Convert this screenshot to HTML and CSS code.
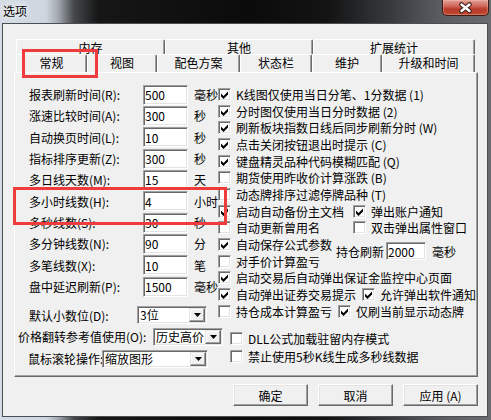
FILE: index.html
```html
<!DOCTYPE html>
<html lang="zh-CN">
<head>
<meta charset="utf-8">
<title>选项</title>
<link rel="stylesheet" href="styles.css">
</head>
<body>
<div class="window">
  <div class="titlebar">
    <span class="title">选项</span>
    <div class="close">
      <svg width="45" height="14" viewBox="0 0 45 14">
        <path d="M18.5 3.5 L26.5 10 M26.5 3.5 L18.5 10" stroke="#3b1b15" stroke-width="4.6" stroke-linecap="round" fill="none"/>
        <path d="M18.5 3.5 L26.5 10 M26.5 3.5 L18.5 10" stroke="#ffffff" stroke-width="2.4" stroke-linecap="round" fill="none"/>
      </svg>
    </div>
  </div>
  <div class="client">
    <div class="sheet">
      <div class="tabrow back">
        <div class="tab t-mem">内存</div>
        <div class="tab t-other">其他</div>
        <div class="tab t-ext">扩展统计</div>
      </div>
      <div class="tabrow front">
        <div class="tab t-gen">常规</div>
        <div class="tab t-view">视图</div>
        <div class="tab t-color">配色方案</div>
        <div class="tab t-status">状态栏</div>
        <div class="tab t-maint">维护</div>
        <div class="tab t-upg">升级和时间</div>
      </div>
      <div class="panel">
        <div class="cols">
          <div class="leftcol">
            <div class="lgrid">
              <span class="lbl">报表刷新时间(R):</span><input class="field" value="500"><span class="unit">毫秒</span>
              <span class="lbl">涨速比较时间(A):</span><input class="field" value="300"><span class="unit">秒</span>
              <span class="lbl">自动换页时间(L):</span><input class="field" value="10"><span class="unit">秒</span>
              <span class="lbl">指标排序更新(Z):</span><input class="field" value="300"><span class="unit">秒</span>
              <span class="lbl">多日线天数(M):</span><input class="field" value="15"><span class="unit">天</span>
              <span class="lbl">多小时线数(H):</span><input class="field" value="4"><span class="unit">小时</span>
              <span class="lbl">多秒线数(S):</span><input class="field" value="30"><span class="unit">秒</span>
              <span class="lbl">多分钟线数(N):</span><input class="field" value="90"><span class="unit">分</span>
              <span class="lbl">多笔线数(X):</span><input class="field" value="10"><span class="unit">笔</span>
              <span class="lbl">盘中延迟刷新(P):</span><input class="field" value="1500"><span class="unit">毫秒</span>
            </div>
            <div class="decrow">
              <span class="lbl">默认小数位(D):</span>
              <div class="combo c-dec"><span class="ctext">3位</span><span class="cbtn"><svg width="7" height="4" viewBox="0 0 7 4"><path d="M0 0 H7 L3.5 4 Z" fill="#000"/></svg></span></div>
            </div>
          </div>
          <div class="rightcol">
            <div class="row"><span class="chk"><span class="cb"><svg width="11" height="11" viewBox="0 0 11 11"><path d="M2 4.5 L4.5 7 L9 2.5 L9 5.5 L4.5 10 L2 7.5 Z" fill="#000"/></svg></span>K线图仅使用当日分笔、1分数据 (1)</span></div>
            <div class="row"><span class="chk"><span class="cb"><svg width="11" height="11" viewBox="0 0 11 11"><path d="M2 4.5 L4.5 7 L9 2.5 L9 5.5 L4.5 10 L2 7.5 Z" fill="#000"/></svg></span>分时图仅使用当日分时数据 (2)</span></div>
            <div class="row"><span class="chk"><span class="cb"><svg width="11" height="11" viewBox="0 0 11 11"><path d="M2 4.5 L4.5 7 L9 2.5 L9 5.5 L4.5 10 L2 7.5 Z" fill="#000"/></svg></span>刷新板块指数日线后同步刷新分时 (W)</span></div>
            <div class="row"><span class="chk"><span class="cb"><svg width="11" height="11" viewBox="0 0 11 11"><path d="M2 4.5 L4.5 7 L9 2.5 L9 5.5 L4.5 10 L2 7.5 Z" fill="#000"/></svg></span>点击关闭按钮退出时提示 (C)</span></div>
            <div class="row"><span class="chk"><span class="cb"><svg width="11" height="11" viewBox="0 0 11 11"><path d="M2 4.5 L4.5 7 L9 2.5 L9 5.5 L4.5 10 L2 7.5 Z" fill="#000"/></svg></span>键盘精灵品种代码模糊匹配 (Q)</span></div>
            <div class="row"><span class="chk"><span class="cb"></span>期货使用昨收价计算涨跌 (B)</span></div>
            <div class="row"><span class="chk"><span class="cb"></span>动态牌排序过滤停牌品种 (T)</span></div>
            <div class="row"><span class="chk fix"><span class="cb"><svg width="11" height="11" viewBox="0 0 11 11"><path d="M2 4.5 L4.5 7 L9 2.5 L9 5.5 L4.5 10 L2 7.5 Z" fill="#000"/></svg></span>启动自动备份主文档</span><span class="chk"><span class="cb"><svg width="11" height="11" viewBox="0 0 11 11"><path d="M2 4.5 L4.5 7 L9 2.5 L9 5.5 L4.5 10 L2 7.5 Z" fill="#000"/></svg></span>弹出账户通知</span></div>
            <div class="row"><span class="chk fix"><span class="cb"></span>自动更新曾用名</span><span class="chk"><span class="cb"></span>双击弹出属性窗口</span></div>
            <div class="pair">
              <div class="pairchecks">
                <div class="row"><span class="chk"><span class="cb"><svg width="11" height="11" viewBox="0 0 11 11"><path d="M2 4.5 L4.5 7 L9 2.5 L9 5.5 L4.5 10 L2 7.5 Z" fill="#000"/></svg></span>自动保存公式参数</span></div>
                <div class="row"><span class="chk"><span class="cb"></span>对手价计算盈亏</span></div>
              </div>
              <div class="refresh">
                <span>持仓刷新</span><input class="field f-ref" value="2000"><span class="unit2">毫秒</span>
              </div>
            </div>
            <div class="row"><span class="chk"><span class="cb"><svg width="11" height="11" viewBox="0 0 11 11"><path d="M2 4.5 L4.5 7 L9 2.5 L9 5.5 L4.5 10 L2 7.5 Z" fill="#000"/></svg></span>启动交易后自动弹出保证金监控中心页面</span></div>
            <div class="row"><span class="chk"><span class="cb"><svg width="11" height="11" viewBox="0 0 11 11"><path d="M2 4.5 L4.5 7 L9 2.5 L9 5.5 L4.5 10 L2 7.5 Z" fill="#000"/></svg></span>自动弹出证券交易提示</span><span class="chk"><span class="cb"><svg width="11" height="11" viewBox="0 0 11 11"><path d="M2 4.5 L4.5 7 L9 2.5 L9 5.5 L4.5 10 L2 7.5 Z" fill="#000"/></svg></span>允许弹出软件通知</span></div>
            <div class="row"><span class="chk"><span class="cb"></span>持仓成本计算盈亏</span><span class="chk"><span class="cb"><svg width="11" height="11" viewBox="0 0 11 11"><path d="M2 4.5 L4.5 7 L9 2.5 L9 5.5 L4.5 10 L2 7.5 Z" fill="#000"/></svg></span>仅刷当前显示动态牌</span></div>
          </div>
        </div>
        <div class="bottom">
          <div class="brow b1">
            <div class="lpart">
              <span class="blbl">价格翻转参考值使用(O):</span>
              <div class="combo c-price"><span class="ctext">历史高价</span><span class="cbtn"><svg width="7" height="4" viewBox="0 0 7 4"><path d="M0 0 H7 L3.5 4 Z" fill="#000"/></svg></span></div>
            </div>
            <span class="chk"><span class="cb"></span>DLL公式加载驻留内存模式</span>
          </div>
          <div class="brow b2">
            <div class="lpart">
              <span class="blbl">鼠标滚轮操作:</span>
              <div class="combo c-wheel"><span class="ctext">缩放图形</span><span class="cbtn"><svg width="7" height="4" viewBox="0 0 7 4"><path d="M0 0 H7 L3.5 4 Z" fill="#000"/></svg></span></div>
            </div>
            <span class="chk"><span class="cb"></span>禁止使用5秒K线生成多秒线数据</span>
          </div>
        </div>
      </div>
    </div>
    <div class="buttons">
      <button class="btn">确定</button>
      <button class="btn">取消</button>
      <button class="btn">应用 (A)</button>
    </div>
  </div>
  <div class="mark m-tab"></div>
  <div class="mark m-row"></div>
</div>
</body>
</html>
```

FILE: styles.css
```css
* { box-sizing: border-box; }
html, body { margin: 0; padding: 0; }
body {
  width: 491px;
  height: 420px;
  overflow: hidden;
  font-family: "Noto Sans CJK SC", "Noto Sans", sans-serif;
  font-size: 12px;
  color: #000;
  background: #1a1a1a;
}
.window {
  position: relative;
  width: 491px;
  height: 420px;
  display: flex;
  flex-direction: column;
  background: linear-gradient(to right, #d4dce5 0px, #cdd5de 46px, #a3a9b0 58px, #45484b 74px, #161616 98px, #0b0b0b 250px, #141414 330px, #373a3d 390px, #595d61 440px, #686c70 491px);
}
.titlebar {
  height: 23px;
  display: flex;
  justify-content: space-between;
  align-items: flex-start;
}
.title {
  padding-left: 3px;
  line-height: 22px;
  text-shadow: 0 0 4px #fff, 0 0 8px #fff;
}
.close {
  width: 47px;
  height: 16px;
  margin-right: 2px;
  border: 1px solid #3e1a14;
  border-top: none;
  border-radius: 0 0 5px 5px;
  background: linear-gradient(to bottom, #e3a095 0px, #d0685c 6px, #b83b2c 9px, #c2482f 15px);
  box-shadow: inset 0 0 0 1px rgba(255,200,190,0.35);
  display: flex;
  align-items: center;
  justify-content: center;
}
.client {
  flex: 1;
  margin: 0 3px 3px 2px;
  border: 1px solid #4a4d51;
  background: #f0f0f0;
}
.sheet {
  margin: 15px 0 0 11px;
  width: 464px;
}
.tabrow {
  display: flex;
  padding-left: 2px;
}
.tab {
  border-top: 1px solid #fff;
  border-left: 1px solid #fff;
  border-right: 1px solid #696969;
  box-shadow: inset -1px 0 #a0a0a0;
  border-radius: 2px 2px 0 0;
  text-align: center;
  overflow: hidden;
  white-space: nowrap;
}
.back { height: 15px; }
.back .tab { height: 15px; line-height: 15px; }
.front { height: 18px; }
.front .tab { height: 18px; line-height: 16px; }
.t-mem { width: 149px; }
.t-other { width: 148px; }
.t-ext { width: 162px; }
.t-gen { width: 71px; }
.t-view { width: 70px; }
.t-color { width: 83px; }
.t-status { width: 72px; }
.t-maint { width: 70px; }
.t-upg { width: 93px; }

.panel {
  height: 305px;
  border: 1px solid;
  border-color: #fff #696969 #696969 #fff;
  box-shadow: inset -1px -1px #a0a0a0;
}
.cols { display: flex; }
.leftcol {
  width: 203px;
  padding: 11px 0 0 14px;
}
.lgrid {
  display: grid;
  grid-template-columns: 108px 45px auto;
  column-gap: 6px;
  grid-auto-rows: 21.33px;
  align-items: center;
}
.lbl { white-space: nowrap; }
.field {
  width: 45px;
  height: 20px;
  margin: 0;
  padding: 0 1px;
  font: inherit;
  font-size: 12px;
  color: #000;
  background: #fff;
  border: 1px solid;
  border-color: #a0a0a0 #fff #fff #a0a0a0;
  box-shadow: inset 1px 1px #696969, inset -1px -1px #e3e3e3;
  outline: none;
}
.unit { white-space: nowrap; }
.decrow {
  display: flex;
  align-items: center;
  margin-top: 9px;
  height: 18px;
}
.decrow .lbl { width: 108px; }
.combo {
  display: flex;
  height: 18px;
  background: #fff;
  border: 1px solid;
  border-color: #a0a0a0 #fff #fff #a0a0a0;
  box-shadow: inset 1px 1px #696969, inset -1px -1px #e3e3e3;
  padding: 1px;
}
.ctext {
  flex: 1;
  line-height: 14px;
  padding-left: 1px;
  white-space: nowrap;
  overflow: hidden;
}
.cbtn {
  width: 16px;
  height: 14px;
  background: #f0f0f0;
  border: 1px solid;
  border-color: #e3e3e3 #696969 #696969 #e3e3e3;
  box-shadow: inset -1px -1px #a0a0a0, inset 1px 1px #fff;
  display: flex;
  align-items: center;
  justify-content: center;
}
.c-dec { width: 70px; }
.c-price { width: 70px; }
.c-wheel { width: 106px; }

.rightcol {
  padding-top: 13px;
  flex: 1;
}
.row {
  height: 16.7px;
  display: flex;
  align-items: center;
  white-space: nowrap;
}
.chk {
  display: inline-flex;
  align-items: center;
  gap: 5px;
  white-space: nowrap;
}
.row .chk + .chk { margin-left: 6px; }
.row .chk.fix { width: 135px; }
.row .chk.fix + .chk { margin-left: 0; }
.cb {
  width: 13px;
  height: 13px;
  flex: none;
  background: #fff;
  border: 1px solid;
  border-color: #a0a0a0 #fff #fff #a0a0a0;
  box-shadow: inset 1px 1px #696969, inset -1px -1px #e3e3e3;
  display: flex;
  align-items: center;
  justify-content: center;
}
.cb svg { display: block; }
.pair {
  display: flex;
  align-items: center;
}
.refresh {
  display: flex;
  align-items: center;
  margin-left: 4px;
  margin-top: -3px;
  white-space: nowrap;
}
.f-ref {
  width: 40px;
  height: 18px;
  margin-left: 2px;
}
.unit2 { margin-left: 6px; }

.bottom { margin-top: 4px; }
.brow {
  display: flex;
  height: 17px;
}
.b2 { margin-top: 5px; }
.lpart {
  width: 215px;
  display: flex;
  align-items: center;
}
.b1 .lpart { padding-left: 3px; }
.b1 .blbl { width: 135px; }
.b2 .lpart { padding-left: 13px; }
.b2 .blbl { width: 74px; }
.blbl { white-space: nowrap; }
.b1 .chk { align-self: flex-end; height: 13px; }
.b2 .chk { align-self: flex-start; height: 13px; }

.buttons {
  display: flex;
  justify-content: flex-end;
  gap: 10px;
  margin: 7px 9px 0 0;
}
.btn {
  width: 75px;
  height: 22px;
  margin: 0;
  padding: 0;
  font: inherit;
  font-size: 12px;
  color: #000;
  background: #f0f0f0;
  border: 1px solid;
  border-color: #fff #696969 #696969 #fff;
  box-shadow: inset -1px -1px #a0a0a0, inset 1px 1px #e3e3e3;
}
.mark {
  position: absolute;
  border: 3px solid #ef3b3b;
}
.m-tab { left: 22px; top: 49px; width: 76px; height: 29px; }
.m-row { left: 13px; top: 187px; width: 214px; height: 38px; }
```
